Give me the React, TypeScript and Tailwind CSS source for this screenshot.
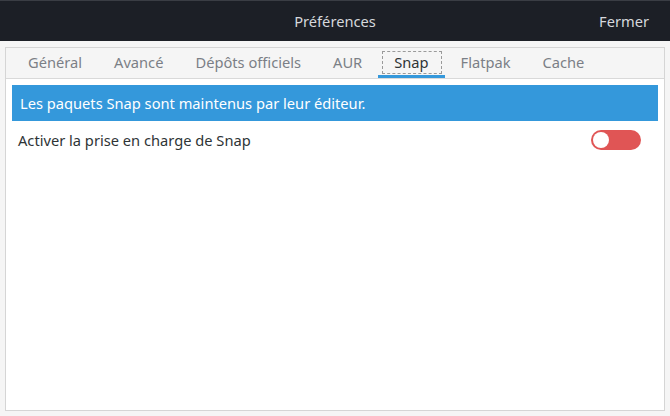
import React, { useState } from 'react'

const tabs = ['Général', 'Avancé', 'Dépôts officiels', 'AUR', 'Snap', 'Flatpak', 'Cache']

export default function App() {
    const [active, setActive] = useState('Snap')
    const [snapOn, setSnapOn] = useState(false)

    return (
        <div className="w-[670px] h-[416px] flex flex-col bg-[#f5f5f5] text-[14.67px] font-['Noto_Sans',sans-serif] overflow-hidden">
            {/* Header bar */}
            <div className="h-[41px] shrink-0 bg-[#1c1f26] border-t border-[#3a3d44] flex items-center relative">
                <div className="flex-1 text-center text-[#d6d8dc]">Préférences</div>
                <button className="absolute right-[21px] top-[9px] text-[#d6d8dc]">Fermer</button>
            </div>

            {/* Notebook */}
            <div className="flex-1 mx-[5px] mt-[6px] mb-[5px] border border-[#d5d5d5] flex flex-col">
                <div className="h-[31px] shrink-0 flex pl-[6px] border-b border-[#d9d9d9]">
                    {tabs.map(tab => (
                        <button
                            key={tab}
                            onClick={() => setActive(tab)}
                            className={
                                tab === active
                                    ? 'relative px-[16px] text-[#2e3436] border-b-[3px] border-[#3498db] pt-[1px]'
                                    : 'relative px-[16px] text-[#7b7f86] border-b-[3px] border-transparent pt-[1px]'
                            }
                        >
                            {tab === active && (
                                <span className="absolute left-[4px] right-[3px] top-[3px] bottom-[1px] border border-dashed border-[#9a9a9a]" />
                            )}
                            {tab}
                        </button>
                    ))}
                </div>
                <div className="flex-1 bg-white px-[6px] pt-[6px]">
                    <div className="h-[36px] bg-[#3498db] text-white flex items-center px-[8px]">
                        Les paquets Snap sont maintenus par leur éditeur.
                    </div>
                    <div className="h-[38px] flex items-center justify-between pl-[6px] pr-[17px] text-[#2e3436]">
                        <span>Activer la prise en charge de Snap</span>
                        <button
                            onClick={() => setSnapOn(!snapOn)}
                            className={snapOn
                                ? 'w-[50px] h-[20px] rounded-full bg-[#3498db] flex items-center justify-end p-[2px]'
                                : 'w-[50px] h-[20px] rounded-full bg-[#e05555] flex items-center p-[2px]'}
                        >
                            <span className="w-[16px] h-[16px] rounded-full bg-white" />
                        </button>
                    </div>
                </div>
            </div>
        </div>
    )
}
